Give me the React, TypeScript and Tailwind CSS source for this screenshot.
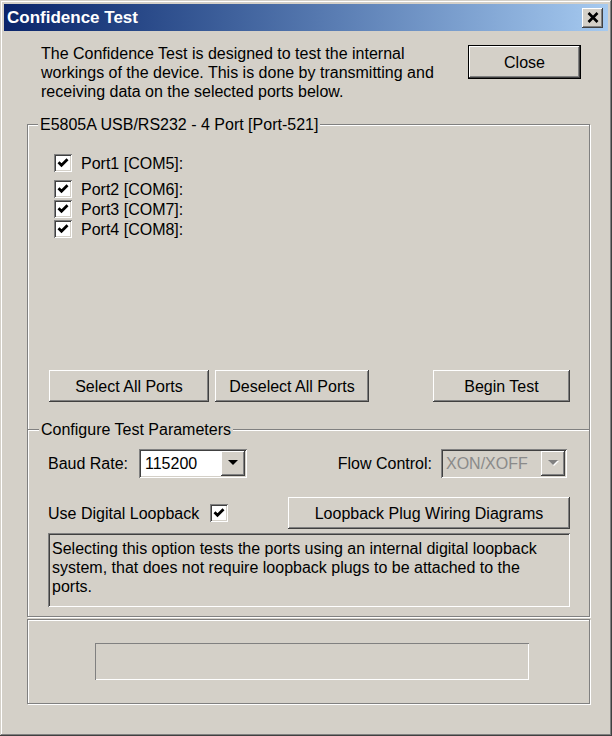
import React from 'react';

const raised =
  'shadow-[inset_-1px_-1px_0_#404040,inset_1px_1px_0_#ffffff,inset_-2px_-2px_0_#808080,inset_2px_2px_0_#d4d0c8]';
const sunken =
  'shadow-[inset_1px_1px_0_#808080,inset_-1px_-1px_0_#ffffff,inset_2px_2px_0_#404040,inset_-2px_-2px_0_#d4d0c8]';
const etched = 'border border-[#808080] shadow-[inset_1px_1px_0_#ffffff,1px_1px_0_#ffffff]';

const CheckBox: React.FC<{ className?: string }> = ({ className = '' }) => (
  <span className={`flex h-[18px] w-[18px] shrink-0 items-center justify-center bg-white ${sunken} ${className}`}>
    <svg viewBox="0 0 18 18" className="h-[18px] w-[18px]">
      <path d="M4.5 8.2 L7.5 11.2 L13.5 5.2" fill="none" stroke="#000" strokeWidth="2.8" />
    </svg>
  </span>
);

const Button: React.FC<{ className?: string; children: React.ReactNode }> = ({ className = '', children }) => (
  <div className={`flex h-[32px] items-center justify-center bg-[#d4d0c8] ${raised} ${className}`}>{children}</div>
);

const DropButton: React.FC<{ disabled?: boolean }> = ({ disabled }) => (
  <span className={`flex h-[25px] w-[24px] shrink-0 items-center justify-center bg-[#d4d0c8] ${raised}`}>
    <svg viewBox="0 0 11 7" className="h-[7px] w-[11px]">
      {disabled && <path d="M1 1H11L6 6Z" fill="#fff" />}
      <path d="M0 0H10L5 5Z" fill={disabled ? '#808080' : '#000'} />
    </svg>
  </span>
);

export default function App() {
  return (
    <div className="h-[736px] w-[612px] bg-[#d4d0c8] p-[4px] font-['Liberation_Sans',Arial,sans-serif] text-[16px] leading-[19px] text-black shadow-[inset_-1px_-1px_0_#404040,inset_1px_1px_0_#d4d0c8,inset_-2px_-2px_0_#808080,inset_2px_2px_0_#ffffff]">
      {/* title bar */}
      <div className="flex h-[27px] items-center justify-between bg-linear-to-r from-[#0a246a] to-[#a6caf0] pl-[3px] pr-[5px]">
        <span className="text-[17px] font-bold leading-none text-white">Confidence Test</span>
        <span className={`flex h-[20px] w-[21px] items-center justify-center bg-[#d4d0c8] ${raised}`}>
          <svg viewBox="0 0 12 11" className="mb-[1px] h-[11px] w-[12px]">
            <path d="M1.5 1 L10.5 10 M10.5 1 L1.5 10" stroke="#000" strokeWidth="2.6" />
          </svg>
        </span>
      </div>

      {/* intro */}
      <div className="flex pl-[37px] pr-[27px] pt-[13px]">
        <p className="whitespace-nowrap">
          The Confidence Test is designed to test the internal
          <br />
          workings of the device. This is done by transmitting and
          <br />
          receiving data on the selected ports below.
        </p>
        <div className="ml-auto mt-[1px] self-start border border-black">
          <Button className="w-[111px]">Close</Button>
        </div>
      </div>

      {/* ports group */}
      <div className={`relative ml-[23px] mt-[23px] h-[493px] w-[563px] ${etched}`}>
        <span className="absolute left-[10px] top-[-10px] bg-[#d4d0c8] px-[2px]">
          E5805A USB/RS232 - 4 Port [Port-521]
        </span>

        <div className="pl-[26px] pt-[29px]">
          {['Port1 [COM5]:', 'Port2 [COM6]:', 'Port3 [COM7]:', 'Port4 [COM8]:'].map((p, i) => (
            <div key={p} className={`flex h-[18px] items-center gap-[9px] ${i === 0 ? '' : i === 1 ? 'mt-[8px]' : 'mt-[2px]'}`}>
              <CheckBox />
              <span>{p}</span>
            </div>
          ))}
        </div>

        <div className="mt-[132px] flex pl-[21px] pr-[19px]">
          <Button className="w-[160px]">Select All Ports</Button>
          <Button className="ml-[6px] w-[154px]">Deselect All Ports</Button>
          <Button className="ml-auto w-[137px]">Begin Test</Button>
        </div>

        <div className="relative mt-[27px] h-[2px] border-t border-[#808080] bg-white">
          <span className="absolute left-[11px] top-[-10px] bg-[#d4d0c8] px-[2px]">Configure Test Parameters</span>
        </div>

        <div className="mt-[18px] flex h-[29px] items-center pl-[20px] pr-[22px]">
          <span className="w-[91px]">Baud Rate:</span>
          <div className={`flex h-[29px] w-[108px] items-center bg-white p-[2px] ${sunken}`}>
            <span className="flex-1 pl-[4px]">115200</span>
            <DropButton />
          </div>
          <span className="ml-auto">Flow Control:</span>
          <div className={`ml-[9px] flex h-[29px] w-[126px] items-center bg-[#d4d0c8] p-[2px] ${sunken}`}>
            <span className="flex-1 pl-[3px] text-[#8a8a8a]">XON/XOFF</span>
            <DropButton disabled />
          </div>
        </div>

        <div className="mt-[19px] flex h-[32px] items-center pl-[20px] pr-[19px]">
          <span>Use Digital Loopback</span>
          <CheckBox className="ml-[11px]" />
          <Button className="ml-auto w-[282px]">Loopback Plug Wiring Diagrams</Button>
        </div>

        <div className={`ml-[20px] mt-[4px] h-[74px] w-[522px] whitespace-nowrap pl-[4px] pt-[6px] ${sunken}`}>
          Selecting this option tests the ports using an internal digital loopback
          <br />
          system, that does not require loopback plugs to be attached to the
          <br />
          ports.
        </div>
      </div>

      {/* progress group */}
      <div className={`ml-[23px] mt-[2px] h-[85px] w-[563px] ${etched}`}>
        <div className="ml-[67px] mt-[23px] h-[37px] w-[434px] shadow-[inset_1px_1px_0_#808080,inset_-1px_-1px_0_#ffffff]" />
      </div>
    </div>
  );
}
